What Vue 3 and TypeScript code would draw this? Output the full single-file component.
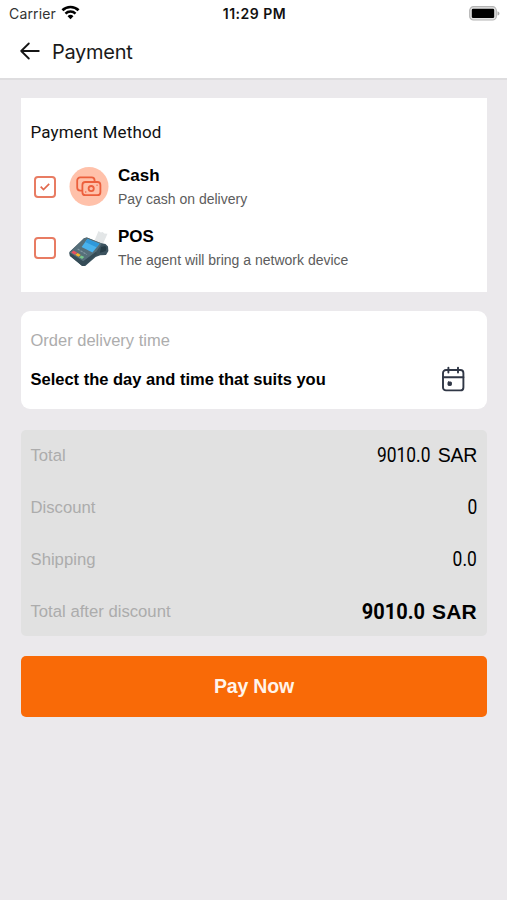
<script setup lang="ts">
import { ref } from 'vue'

interface SummaryRow {
  label: string
  amount: string
  unit?: string
  strong?: boolean
}

const method = ref<'cash' | 'pos'>('cash')

const rows: SummaryRow[] = [
  { label: 'Total', amount: '9010.0', unit: 'SAR' },
  { label: 'Discount', amount: '0' },
  { label: 'Shipping', amount: '0.0' },
  { label: 'Total after discount', amount: '9010.0', unit: 'SAR', strong: true },
]
</script>

<template>
  <div class="screen">
    <header class="header">
      <div class="status">
        <div class="carrier">
          <span class="carrier-name">Carrier</span>
          <svg class="wifi" width="19" height="15" viewBox="0 0 20 15" fill="none">
            <path d="M1.5 5.2a12.2 12.2 0 0 1 17 0" stroke="#000" stroke-width="2.8" />
            <path d="M4.7 8.7a7.6 7.6 0 0 1 10.6 0" stroke="#000" stroke-width="2.6" />
            <path d="M10 14.5 6.9 11.4a4.5 4.5 0 0 1 6.2 0z" fill="#000" />
          </svg>
        </div>
        <span class="clock">11:29 PM</span>
        <svg class="battery" width="31" height="15" viewBox="0 0 31 15">
          <rect x=".7" y=".7" width="26.6" height="13.3" rx="3.8" fill="#e3e3e3" stroke="#b4b4b4" stroke-width="1.2" />
          <rect x="2.8" y="2.7" width="22.4" height="9.3" rx="1.3" fill="#000" />
          <path d="M28.5 5.2c2.6.8 2.6 3.6 0 4.4z" fill="#aaa" />
        </svg>
      </div>
      <div class="titlebar">
        <svg class="back" width="20" height="18" viewBox="0 0 20 18" fill="none" stroke="#151515" stroke-width="1.8" stroke-linecap="round" stroke-linejoin="round">
          <path d="M8.8 1.5 1.2 9l7.6 7.5M1.2 9h17.6" />
        </svg>
        <h1 class="title">Payment</h1>
      </div>
    </header>

    <main class="content">
      <section class="methods">
        <h2 class="methods-title">Payment Method</h2>
        <div class="method" @click="method = 'cash'">
          <span class="check">
            <svg v-if="method === 'cash'" width="10" height="8" viewBox="0 0 10 8" fill="none" stroke="#e2694d" stroke-width="1.7">
              <path d="m.7 3.7 2.8 2.8L9.2.9" />
            </svg>
          </span>
          <svg class="method-icon" width="40" height="40" viewBox="0 0 40 40" fill="none">
            <circle cx="20" cy="19.5" r="19.5" fill="#ffc1aa" />
            <g stroke="#ec5f3c" stroke-width="1.8" stroke-linecap="round" stroke-linejoin="round">
              <path d="M12.8 23.6h-1.6a3 3 0 0 1-3-3v-7.2a3 3 0 0 1 3-3h11.4a3 3 0 0 1 3 3v1.2" />
              <rect x="13.4" y="15" width="18" height="13.2" rx="3" />
              <circle cx="22.2" cy="21.6" r="2.6" />
              <path d="M16.7 25h.1M28 18.2h.1" stroke-width="1.3" />
            </g>
          </svg>
          <div class="method-text">
            <span class="name">Cash</span>
            <span class="hint">Pay cash on delivery</span>
          </div>
        </div>
        <div class="method" @click="method = 'pos'">
          <span class="check">
            <svg v-if="method === 'pos'" width="10" height="8" viewBox="0 0 10 8" fill="none" stroke="#e2694d" stroke-width="1.7">
              <path d="m.7 3.7 2.8 2.8L9.2.9" />
            </svg>
          </span>
          <svg class="method-icon" width="40" height="40" viewBox="0 0 40 40">
            <path d="M25.5 12.5 29.5 3l2.3 1.6 1.9-.6 1.5 1.5 3.3.2-4.7 10.5z" fill="#e3e6e7" />
            <path d="M15 10.2 18 9.5 31.5 15l5 .9 2.5 2.6.4 4.4-2.4 4.2-5.8.2-4.6 1.8-10.4 8.8-3 .2L1 27.4.4 24z" fill="#3c535f" />
            <path d="m15 10.2 2.6-.6L33 15.5 27 24 14.4 33.8.4 25z" fill="#566f7a" />
            <path d="m.4 24.5 13.8 8.8L26.7 24l1.4 2-12.7 11.8-2.2.2L.8 28z" fill="#354c57" />
            <path d="M18.4 11 30.5 15.7l-7 8.8L12.6 19z" fill="#49b2ed" />
            <path d="m18.4 11 12.1 4.7-3 3.6-11.3-5.2z" fill="#2f98da" />
            <path d="m4.6 22.6 3.6 2.1-2.4 2-3.6-2.1z" fill="#e6505d" />
            <path d="m8.6 25 3.2 1.9-2.3 1.9-3.3-2z" fill="#f4b32e" />
            <path d="m12.5 27.4 2.8 1.7-2.2 1.8-2.9-1.7z" fill="#76c68b" />
            <path d="m8.6 21 9.4 5.6" stroke="#8298a3" stroke-width="1.1" stroke-dasharray="2.4 1" />
            <path d="m32 19 4.2-1 1.3 2-.8 3-3.8 1.2-2 .5z" fill="#263c46" />
          </svg>
          <div class="method-text">
            <span class="name">POS</span>
            <span class="hint">The agent will bring a network device</span>
          </div>
        </div>
      </section>

      <section class="delivery">
        <span class="delivery-label">Order delivery time</span>
        <div class="delivery-row">
          <span class="delivery-value">Select the day and time that suits you</span>
          <svg width="24" height="26" viewBox="0 0 24 26" fill="none" stroke="#303746" stroke-width="1.9" stroke-linecap="round">
            <rect x="2" y="4" width="20.4" height="20.4" rx="3" />
            <path d="M2 11.3h20.4M7.4 1.6v5M17 1.6v5" />
            <rect x="7" y="16" width="3.4" height="3.4" rx=".6" fill="#303746" stroke-width="1" />
          </svg>
        </div>
      </section>

      <section class="summary">
        <div v-for="row in rows" :key="row.label" class="row" :class="{ strong: row.strong }">
          <span class="row-label">{{ row.label }}</span>
          <span class="row-value">
            <span class="amount">{{ row.amount }}</span>
            <span v-if="row.unit" class="unit">{{ row.unit }}</span>
          </span>
        </div>
      </section>

      <button class="pay" type="button">Pay Now</button>
    </main>
  </div>
</template>

<style>
body {
  background: #ebe9ec;
}
</style>

<style scoped>
.screen {
  width: 100%;
  height: 900px;
  background: #ebe9ec;
  font-family: 'Liberation Sans', Arial, sans-serif;
  color: #000;
  overflow: hidden;
}
.header {
  height: 80px;
  box-sizing: border-box;
  background: #fff;
  border-bottom: 2px solid #dedddf;
}
.status {
  height: 27px;
  padding: 0 7px 0 9px;
  display: grid;
  grid-template-columns: 1fr auto 1fr;
  align-items: center;
  font-family: Inter, sans-serif;
  font-size: 14px;
}
.carrier {
  display: flex;
  align-items: center;
  gap: 5px;
  color: #333;
}
.carrier-name {
  letter-spacing: 0.15px;
}
.wifi {
  margin-bottom: 2px;
}
.clock {
  font-weight: 600;
  letter-spacing: 0.5px;
  color: #111;
}
.battery {
  justify-self: end;
}
.titlebar {
  height: 49px;
  padding-left: 20px;
  display: flex;
  align-items: center;
  gap: 12px;
}
.back {
  margin-bottom: 2px;
}
.title {
  margin: 0;
  padding-top: 1px;
  font: 400 20px Inter, sans-serif;
  letter-spacing: -0.3px;
  color: #1a1a1a;
}
.content {
  padding: 18px 20px 0 21px;
  display: flex;
  flex-direction: column;
}
.methods {
  height: 194px;
  box-sizing: border-box;
  padding: 23px 10px 0 9.5px;
  background: #fff;
}
.methods-title {
  margin: 0 0 24px;
  font: 400 17px/22px Roboto, sans-serif;
  letter-spacing: 0.15px;
  color: #111;
}
.method {
  height: 40px;
  margin-bottom: 21px;
  padding-left: 3.5px;
  display: flex;
  align-items: center;
}
.check {
  width: 22px;
  height: 22px;
  box-sizing: border-box;
  border: 2px solid #e87c63;
  border-radius: 4px;
  display: flex;
  align-items: center;
  justify-content: center;
}
.method-icon {
  margin-left: 12.5px;
}
.method-text {
  margin: 0 0 1px 9.5px;
  display: flex;
  flex-direction: column;
  gap: 4px;
}
.name {
  font-size: 17px;
  line-height: 20px;
  font-weight: 700;
}
.hint {
  font-size: 14px;
  line-height: 18px;
  color: #5c5c5c;
  white-space: nowrap;
}
.delivery {
  height: 98px;
  margin-top: 19px;
  box-sizing: border-box;
  padding: 19px 22px 0 9.5px;
  background: #fff;
  border-radius: 9px;
}
.delivery-label {
  display: block;
  font-size: 16.5px;
  line-height: 20px;
  color: #adadad;
}
.delivery-row {
  margin-top: 16px;
  display: flex;
  align-items: center;
  justify-content: space-between;
}
.delivery-value {
  padding-top: 1px;
  font-size: 16.5px;
  font-weight: 700;
}
.summary {
  height: 206px;
  margin-top: 21px;
  padding: 0 10px 0 9.5px;
  box-sizing: border-box;
  background: #e1e1e1;
  border-radius: 5px;
}
.row {
  height: 52px;
  padding-bottom: 2px;
  box-sizing: border-box;
  display: flex;
  align-items: center;
  justify-content: space-between;
}
.row-label {
  padding-top: 1px;
  font-size: 16.7px;
  color: #acacac;
}
.row-value {
  display: flex;
  align-items: baseline;
  gap: 7px;
  font-size: 19.5px;
}
.amount {
  font-family: Roboto, sans-serif;
  font-size: 20px;
  transform: scaleX(0.87);
  transform-origin: right;
}
.unit {
  letter-spacing: -0.3px;
}
.strong .row-value {
  font-weight: 700;
  font-size: 21px;
}
.strong .amount {
  font-size: 21.5px;
  transform: scaleX(0.93);
}
.strong .unit {
  letter-spacing: 0.2px;
}
.pay {
  height: 61px;
  margin-top: 20px;
  padding: 0;
  border: 0;
  border-radius: 5px;
  background: #f96a07;
  color: #fff4ea;
  font: 700 19.5px 'Liberation Sans', Arial, sans-serif;
  letter-spacing: -0.2px;
}
</style>
